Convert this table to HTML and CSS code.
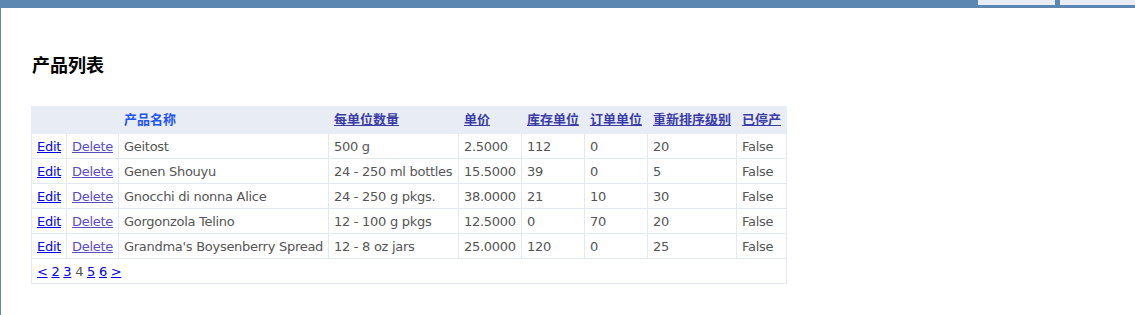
FILE: index.html
```html
<!DOCTYPE html>
<html lang="zh">
<head>
<meta charset="utf-8">
<title>产品列表</title>
<link rel="stylesheet" href="styles.css">
</head>
<body>
<div class="topbar">
  <div class="tab"></div>
  <div class="tab"></div>
</div>
<div class="main">
  <h2 class="title">产品列表</h2>
  <table class="grid">
    <colgroup>
      <col class="c-edit"><col class="c-del"><col class="c-name"><col class="c-qty"><col class="c-price"><col class="c-stock"><col class="c-order"><col class="c-reorder"><col class="c-disc">
    </colgroup>
    <thead>
      <tr>
        <th></th><th></th>
        <th><a class="sort active" href="#">产品名称</a></th>
        <th><a class="sort" href="#">每单位数量</a></th>
        <th><a class="sort" href="#">单价</a></th>
        <th><a class="sort" href="#">库存单位</a></th>
        <th><a class="sort" href="#">订单单位</a></th>
        <th><a class="sort" href="#">重新排序级别</a></th>
        <th><a class="sort" href="#">已停产</a></th>
      </tr>
    </thead>
    <tbody>
      <tr><td><a class="edit" href="#">Edit</a></td><td><a class="del" href="#">Delete</a></td><td>Geitost</td><td>500 g</td><td>2.5000</td><td>112</td><td>0</td><td>20</td><td>False</td></tr>
      <tr><td><a class="edit" href="#">Edit</a></td><td><a class="del" href="#">Delete</a></td><td>Genen Shouyu</td><td>24 - 250 ml bottles</td><td>15.5000</td><td>39</td><td>0</td><td>5</td><td>False</td></tr>
      <tr><td><a class="edit" href="#">Edit</a></td><td><a class="del" href="#">Delete</a></td><td>Gnocchi di nonna Alice</td><td>24 - 250 g pkgs.</td><td>38.0000</td><td>21</td><td>10</td><td>30</td><td>False</td></tr>
      <tr><td><a class="edit" href="#">Edit</a></td><td><a class="del" href="#">Delete</a></td><td>Gorgonzola Telino</td><td>12 - 100 g pkgs</td><td>12.5000</td><td>0</td><td>70</td><td>20</td><td>False</td></tr>
      <tr><td><a class="edit" href="#">Edit</a></td><td><a class="del" href="#">Delete</a></td><td>Grandma's Boysenberry Spread</td><td>12 - 8 oz jars</td><td>25.0000</td><td>120</td><td>0</td><td>25</td><td>False</td></tr>
    </tbody>
    <tfoot>
      <tr><td colspan="9" class="pager"><a class="pg" href="#">&lt;</a> <a class="pg" href="#">2</a> <a class="pg" href="#">3</a> <span>4</span> <a class="pg" href="#">5</a> <a class="pg" href="#">6</a> <a class="pg" href="#">&gt;</a></td></tr>
    </tfoot>
  </table>
</div>
</body>
</html>
```

FILE: styles.css
```css
html, body {
  margin: 0;
  padding: 0;
  background: #ffffff;
  height: 100%;
}
body {
  font-family: "DejaVu Sans", Verdana, "Noto Sans CJK SC", sans-serif;
  font-size: 13px;
  color: #555555;
}
.topbar {
  height: 8px;
  background: #5b87b1;
  display: flex;
  justify-content: flex-end;
  align-items: flex-start;
  gap: 5px;
}
.tab {
  width: 77px;
  height: 5px;
  background: #e8edf5;
}
.tab:last-child {
  width: 75px;
}
.main {
  border-left: 1px solid #5b87b1;
  min-height: calc(100% - 8px);
  box-sizing: border-box;
  padding: 0 30px;
}
.title {
  margin: 0;
  padding-top: 44px;
  padding-left: 1px;
  font-family: "Noto Sans CJK SC", sans-serif;
  font-size: 18px;
  font-weight: bold;
  line-height: 24px;
  color: #000000;
  box-sizing: border-box;
  height: 98px;
}
.grid {
  border-collapse: collapse;
  table-layout: fixed;
  width: 755px;
  margin-top: 0;
}
.c-edit { width: 35px; }
.c-del { width: 52px; }
.c-name { width: 210px; }
.c-qty { width: 130px; }
.c-price { width: 63px; }
.c-stock { width: 63px; }
.c-order { width: 63px; }
.c-reorder { width: 89px; }
.c-disc { width: 50px; }
.grid th {
  background: #e8ecf4;
  height: 27px;
  box-sizing: border-box;
  padding: 0 5px 3px;
  text-align: left;
  font-family: "Noto Sans CJK SC", sans-serif;
  font-size: 13px;
  font-weight: bold;
  white-space: nowrap;
  border: 1px solid #e8ecf4;
}
.grid td {
  border: 1px solid #e3e8f1;
  height: 25px;
  box-sizing: border-box;
  padding: 1px 5px 0;
  white-space: nowrap;
  line-height: 16px;
  letter-spacing: -0.28px;
}
.sort {
  color: #3b3ca8;
  text-decoration: underline;
}
.sort.active {
  color: #2356f0;
  text-decoration: none;
}
.edit {
  color: #0000ee;
  text-decoration: underline;
}
.del {
  color: #5b4bc4;
  text-decoration: underline;
}
.pager {
  padding: 0 5px;
}
.pg {
  color: #0000ee;
  text-decoration: underline;
}
```
